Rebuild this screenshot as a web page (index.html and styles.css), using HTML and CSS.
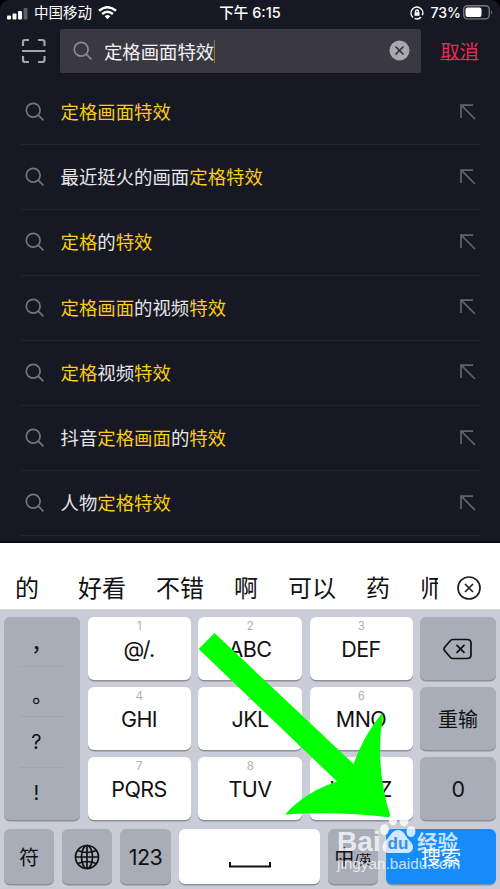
FILE: index.html
```html
<!DOCTYPE html>
<html lang="zh-CN">
<head>
<meta charset="utf-8">
<title>搜索</title>
<link rel="stylesheet" href="styles.css">
</head>
<body>
<svg class="defs" width="0" height="0">
  <symbol id="search" viewBox="0 0 20 20"><circle cx="8.2" cy="8.2" r="6.9"/><path d="M13.2 13.2L18.4 18.4"/></symbol>
  <symbol id="fill" viewBox="0 0 16 16"><path d="M1 14V1.200H13M1.200 1.200L15 15"/></symbol>
</svg>
<div class="phone">
  <header class="status">
    <div class="carrier">
      <svg class="signal" width="21" height="12" viewBox="0 0 21 12"><rect x="0" y="7.500" width="4" height="4" rx="1"/><rect x="5.500" y="5.500" width="4" height="6" rx="1"/><rect x="11" y="3" width="4" height="8.500" rx="1"/><rect x="16.500" y="0" width="4" height="11.500" rx="1" opacity=".3"/></svg>
      <span class="name">中国移动</span>
      <svg class="wifi" width="19" height="14" viewBox="0 0 19 14"><path d="M1 4.800Q9.500-2.300 18 4.800M4.100 8Q9.500 3.600 14.900 8"/><path class="dot" d="M6.700 10.200Q9.500 8 12.300 10.200L9.500 13.200Z"/></svg>
    </div>
    <div class="time">下午 6:15</div>
    <div class="power">
      <svg class="lock" width="14" height="14" viewBox="0 0 14 14"><path d="M3 11.400A5.900 5.900 0 1 1 12.400 9.200M4.600 12.400A5.900 5.900 0 0 0 11 11.300"/><path d="M5.600 6.500V5.300a1.400 1.400 0 0 1 2.800 0V6.500"/><rect x="4.500" y="6.300" width="5" height="3.500"/></svg>
      <span class="pct">73%</span>
      <svg class="battery" width="30" height="15" viewBox="0 0 30 15"><rect class="shell" x=".7" y=".7" width="25.600" height="13.200" rx="3.800"/><rect x="2.500" y="2.500" width="16" height="9.600" rx="2"/><path class="tip" d="M28 5Q30 7.300 28 9.500Z"/></svg>
    </div>
  </header>
  <div class="searchbar">
    <svg class="scan" width="26" height="26" viewBox="0 0 26 26"><path d="M2 8V4Q2 2 4 2H8M17 2H21Q23.500 2 23.500 4V8M2 18V22Q2 24 4 24H8M17 24H21Q23.500 24 23.500 22V18M1 13H24.500"/></svg>
    <div class="field">
      <svg class="mag" width="20" height="20"><use href="#search"/></svg>
      <span class="query">定格画面特效</span><i class="caret"></i>
      <svg class="clear" width="21" height="21" viewBox="0 0 21 21"><circle cx="10.500" cy="10.500" r="10"/><path d="M6.500 6.500l8 8M14.500 6.500l-8 8"/></svg>
    </div>
    <a class="cancel">取消</a>
  </div>
  <ul class="results">
    <li><svg class="mag"><use href="#search"/></svg><span><b>定格画面特效</b></span><svg class="use"><use href="#fill"/></svg></li>
    <li><svg class="mag"><use href="#search"/></svg><span>最近挺火的画面<b>定格特效</b></span><svg class="use"><use href="#fill"/></svg></li>
    <li><svg class="mag"><use href="#search"/></svg><span><b>定格</b>的<b>特效</b></span><svg class="use"><use href="#fill"/></svg></li>
    <li><svg class="mag"><use href="#search"/></svg><span><b>定格画面</b>的视频<b>特效</b></span><svg class="use"><use href="#fill"/></svg></li>
    <li><svg class="mag"><use href="#search"/></svg><span><b>定格</b>视频<b>特效</b></span><svg class="use"><use href="#fill"/></svg></li>
    <li><svg class="mag"><use href="#search"/></svg><span>抖音<b>定格画面</b>的<b>特效</b></span><svg class="use"><use href="#fill"/></svg></li>
    <li><svg class="mag"><use href="#search"/></svg><span>人物<b>定格特效</b></span><svg class="use"><use href="#fill"/></svg></li>
  </ul>
  <div class="candidates">
    <div class="words"><span>的</span><span>好看</span><span>不错</span><span>啊</span><span>可以</span><span>药</span><span>师</span></div>
    <svg class="close" width="26" height="26" viewBox="0 0 26 26"><circle cx="13" cy="13" r="11"/><path d="M9 9l8 8M17 9l-8 8"/></svg>
  </div>
  <div class="keyboard">
    <div class="keys">
      <div class="key dark punct"><span class="comma">，</span><span class="stop">。</span><span>?</span><span>!</span></div>
      <div class="key"><small>1</small>@/.</div>
      <div class="key"><small>2</small>ABC</div>
      <div class="key"><small>3</small>DEF</div>
      <div class="key dark"><svg width="30" height="22" viewBox="0 0 30 22"><path d="M10 1.500H24Q28 1.500 28 5V17Q28 20.500 24 20.500H10Q8.500 20.500 7.500 19.500L1.500 12.500Q.5 11 1.500 9.500L7.500 2.500Q8.500 1.500 10 1.500Z"/><path d="M13.500 6.800l8 8M21.500 6.800l-8 8"/></svg></div>
      <div class="key"><small>4</small>GHI</div>
      <div class="key"><small>5</small>JKL</div>
      <div class="key"><small>6</small>MNO</div>
      <div class="key dark cn">重输</div>
      <div class="key"><small>7</small>PQRS</div>
      <div class="key"><small>8</small>TUV</div>
      <div class="key"><small>9</small>WXYZ</div>
      <div class="key dark">0</div>
    </div>
    <div class="bottom">
      <div class="key dark cn">符</div>
      <div class="key dark"><svg width="26" height="26" viewBox="0 0 26 26"><circle cx="13" cy="13" r="11.500"/><ellipse cx="13" cy="13" rx="5.500" ry="11.500"/><path d="M13 1.500V24.500M1.500 13H24.500M4 6.500Q13 10.500 22 6.500M4 19.500Q13 15.500 22 19.500"/></svg></div>
      <div class="key dark">123</div>
      <div class="key space"><svg width="42" height="6" viewBox="0 0 42 6"><path d="M1 0V4.500H41V0"/></svg></div>
      <div class="key dark cn lang">中<span>/英</span></div>
      <div class="key go cn">搜索</div>
    </div>
  </div>
  <svg class="arrow" width="195" height="190" viewBox="0 0 195 190"><path d="M14.500 0L153.500 131Q164 102 182 80Q184 85 181 96Q177 144 191 184.500Q140 178 85 181.500Q105 159 137 148.500L-1.300 16Z"/></svg>
  <div class="watermark">
    <div class="brand"><span class="bai">Bai</span><svg width="37" height="43" viewBox="0 0 37 43"><ellipse cx="13" cy="5.500" rx="4.300" ry="6"/><ellipse cx="24" cy="6.500" rx="4.500" ry="6"/><ellipse cx="4.500" cy="15.500" rx="4.300" ry="5.500"/><ellipse cx="31" cy="17.500" rx="4.500" ry="5.500"/><path d="M18 16C24 16 25 22 29 26C36 32 33 39 27 39H9C2 39 0 32 6 26C11 22 12 16 18 16Z"/><text x="7.500" y="35">du</text></svg><span class="jy">经验</span></div>
    <div class="url">jingyan.baidu.com</div>
  </div>
</div>
</body>
</html>
```
FILE: styles.css
```css
* { box-sizing: border-box; }
body { margin: 0; background: #000; font-family: Inter, "Noto Sans CJK SC", sans-serif; }
svg { display: block; flex: none; fill: none; }
.defs { position: absolute; }
.phone { position: relative; width: 500px; height: 889px; overflow: hidden; background: #161823; border-radius: 9px 9px 0 0; display: flex; flex-direction: column; }

.status { height: 25px; flex: none; display: grid; grid-template-columns: 1fr auto 1fr; align-items: center; padding: 0 7px; color: #fff; font-size: 14px; }
.carrier, .power { display: flex; align-items: center; }
.signal { fill: #fff; margin-top: 3px; }
.name { margin: 0 6px 0 6px; font-size: 14.500px; line-height: 20px; }
.wifi { stroke: #fff; stroke-width: 2.500; }
.wifi .dot { fill: #fff; stroke: none; }
.time { font-weight: 500; font-size: 14.500px; line-height: 20px; }
.power { justify-content: flex-end; }
.lock { stroke: #fff; stroke-width: 1.500; overflow: visible; }
.lock rect { fill: #fff; stroke: none; }
.pct { margin: 0 2px 0 7px; font-weight: 500; }
.battery { fill: #fff; }
.battery .shell { fill: none; stroke: #777982; stroke-width: 1.400; }
.battery .tip { fill: #777982; }

.searchbar { flex: none; height: 54px; padding: 4px 20px 6px 21px; display: flex; align-items: center; }
.scan { stroke: #a4a5aa; stroke-width: 2.200; }
.field { margin-left: 13.400px; width: 361px; height: 44px; border-radius: 2px; background: #3a3943; display: flex; align-items: center; padding: 0 11px 0 13px; }
.mag { width: 20px; height: 20px; stroke: #74757c; stroke-width: 1.700; }
.field .mag { stroke: #8a8a91; }
.query { margin-left: 10.500px; font-size: 18.400px; color: #f2f2f3; }
.caret { width: 1px; height: 23px; background: #8b7a26; }
.clear { margin-left: auto; margin-top: -2px; fill: #a9a9ad; stroke: #30303a; stroke-width: 1.700; }
.clear circle { stroke: none; }
.cancel { margin-left: 19px; margin-top: -1px; color: #e92b51; font-size: 19.200px; text-decoration: underline; text-decoration-thickness: 1px; text-underline-offset: 0; }

.results { flex: none; height: 464px; margin: 0; padding: 1px 20px 0; list-style: none; border-bottom: 2px solid #090a14; }
.results li { height: 65.200px; display: flex; align-items: center; padding: 0 4px 0 5px; border-bottom: 1px solid #22242e; color: #e6e6e8; font-size: 18.400px; line-height: 28px; }
.results span { margin-left: 15.500px; }
.results b { font-weight: 400; color: #facc15; }
.use { width: 16px; height: 16px; margin-left: auto; margin-top: -1px; stroke: #62646c; stroke-width: 1.700; }

.candidates { flex: none; height: 66px; padding: 24px 19px 0 15px; background: #fff; display: flex; align-items: center; color: #111; font-size: 24px; }
.words { width: 423px; display: flex; overflow: hidden; white-space: nowrap; gap: 30px; line-height: 40px; padding-top: 2px; }
.words span:first-child { margin-right: 9px; }
.close { margin-left: auto; margin-right: -1px; stroke: #222; stroke-width: 1.700; }

.keyboard { flex: 1; padding: 7px 4px 0; background: #cacdd7; border-top: 1px solid #d5d7de; color: #111; }
.keys { height: 203px; display: grid; grid-template-columns: 76px 103px 104px 103px 76px; grid-template-rows: repeat(3, 63px); column-gap: 7.500px; row-gap: 7px; }
.key { position: relative; display: flex; align-items: center; justify-content: center; border-radius: 6px; background: #fff; box-shadow: 0 1.500px 0 #8c9099; font-size: 21.500px; letter-spacing: -.6px; }
.key small { position: absolute; top: 2px; left: 0; width: 100%; text-align: center; font-size: 11.500px; line-height: 15px; color: #b0b1b5; }
.dark { background: #a9adb8; }
.key svg { stroke: #111; stroke-width: 1.700; }
.punct { grid-row: span 3; flex-direction: column; justify-content: flex-start; align-items: flex-start; padding: 0 15px; font-size: 20px; }
.punct span { width: 46px; height: 50.200px; flex: none; display: flex; align-items: center; justify-content: center; padding-right: 12px; border-bottom: 1px solid #a0a4af; }
.punct span:last-child { border: 0; }
.punct .comma { padding: 2px 2px 0 0; font-weight: 500; }
.punct .stop { padding: 6px 0 0; font-weight: 500; }
.cn { font-size: 20px; letter-spacing: 0; }
.bottom { height: 55px; margin-top: 9px; display: grid; grid-template-columns: 50px 50px 51px 141px 50px 110px; justify-content: space-between; }
.space svg { margin-top: 17px; stroke-width: 2; }
.lang span { font-size: 13px; padding-top: 4px; }
.go { background: #168bfa; color: #fff; }

.arrow { position: absolute; left: 200px; top: 633px; fill: #0f0; overflow: visible; }
.watermark { position: absolute; left: 337px; top: 814px; color: rgba(255, 255, 255, .75); font-family: "Liberation Sans", sans-serif; }
.brand { height: 43px; display: flex; align-items: flex-start; }
.bai { font-size: 28px; font-weight: 700; line-height: 32px; margin-top: 12px; width: 43px; }
.brand svg { fill: rgba(255, 255, 255, .8); overflow: visible; }
.brand text { fill: #3c8fe0; font: 700 17px "Liberation Sans", sans-serif; }
.jy { font: 700 20.500px/30px "Noto Sans CJK SC", sans-serif; margin: 12px 0 0 0; }
.url { margin-top: -2px; font-size: 15.300px; line-height: 18px; }
```
